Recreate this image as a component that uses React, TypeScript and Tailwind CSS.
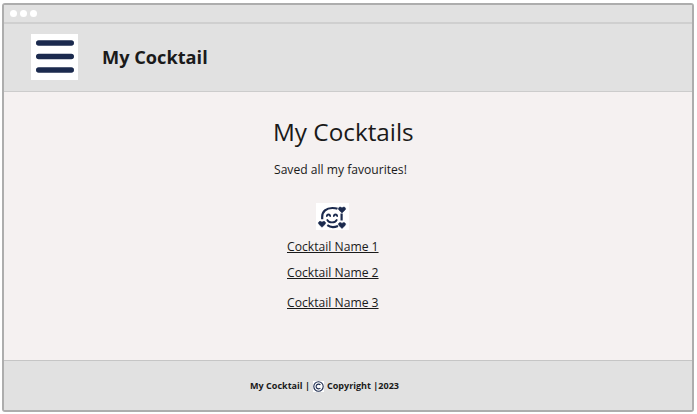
const links = [
  { name: "Cocktail Name 1", gap: "" },
  { name: "Cocktail Name 2", gap: "mt-[10px]" },
  { name: "Cocktail Name 3", gap: "mt-[14px]" },
];

function MenuIcon() {
  return (
    <svg className="block h-[46px] w-[47px] bg-white" viewBox="0 0 47 46" fill="none" stroke="#1b2a4e" strokeWidth="5.4" strokeLinecap="round">
      <path d="M7.7 9H40.3M7.7 22.5H40.3M7.7 36H40.3" />
    </svg>
  );
}

function LoveFaceIcon() {
  return (
    <svg className="block h-[27px] w-[33px] bg-white" viewBox="0 0 33 27" fill="none" stroke="#1b2a4e" strokeWidth="2.2">
      <path d="M21.5 5.8C19.8 5.1 18.4 5 16.3 5C10.3 5 6.2 8.5 6.2 13.8V16.3M11.3 22.2C14 24.2 18.3 24.4 22 22.9M25.6 10.6V17.6" />
      <path d="M10.8 13C11.2 11 13.8 11 14.2 13M17.8 13C18.2 11 20.8 11 21.2 13M11.3 17C13 20.2 19 20.2 20.7 17" strokeWidth="1.8" strokeLinecap="round" />
      <g fill="#1b2a4e" stroke="#1b2a4e" strokeWidth="0.5">
        <path d="M26 10L22.9 7C21.2 5.1 24 2.8 26 4.9C28 2.8 30.8 5.1 29.1 7Z" />
        <path d="M6 24.3L2.9 21.3C1.2 19.4 4 17.1 6 19.2C8 17.1 10.8 19.4 9.1 21.3Z" />
        <path d="M26 25.5L22.9 22.5C21.2 20.6 24 18.3 26 20.4C28 18.3 30.8 20.6 29.1 22.5Z" />
      </g>
    </svg>
  );
}

function CopyrightIcon() {
  return (
    <svg className="block h-[11px] w-[11px] bg-white" viewBox="0 0 11 11" fill="none" stroke="#1b2a4e" strokeWidth="1.1">
      <circle cx="5.5" cy="5.5" r="4.7" />
      <path d="M7.4 4A2.4 2.4 0 1 0 7.4 7" />
    </svg>
  );
}

export default function App() {
  return (
    <div className="h-[414px] w-[697px] bg-white pl-[2px] pt-[3px] font-['Open_Sans',sans-serif] text-[#1a1a1a]">
      <div className="flex h-[409px] w-[692px] flex-col overflow-hidden rounded-[3px] border-2 border-[#adadad] bg-[#f5f1f1]">
        <div className="flex h-[19px] shrink-0 items-center gap-[3px] border-b-2 border-[#cfcfcf] bg-[#e1e1e1] pl-[5.5px]">
          <span className="h-[7px] w-[7px] rounded-full bg-white" />
          <span className="h-[7px] w-[7px] rounded-full bg-white" />
          <span className="h-[7px] w-[7px] rounded-full bg-white" />
        </div>
        <header className="flex h-[68px] shrink-0 items-center border-b border-[#cccccc] bg-[#e1e1e1] pb-[2px] pl-[27px]">
          <MenuIcon />
          <span className="ml-[24px] whitespace-nowrap text-[18.2px] font-bold leading-6">My Cocktail</span>
        </header>
        <main className="flex flex-1 flex-col pt-[24px]">
          <h1 className="ml-[269px] whitespace-nowrap text-[24.3px] leading-8">My Cocktails</h1>
          <p className="ml-[270px] mt-[14px] whitespace-nowrap text-[12.12px] leading-4">Saved all my favourites!</p>
          <div className="ml-[312px] mt-[25px]"><LoveFaceIcon /></div>
          <nav className="ml-[283px] mt-[9px] flex flex-col items-start">
            {links.map((link) => (
              <a key={link.name} href="#" className={"whitespace-nowrap text-[12.15px] leading-4 underline " + link.gap}>{link.name}</a>
            ))}
          </nav>
        </main>
        <footer className="flex h-[50px] shrink-0 items-center border-t border-[#c5c5c5] bg-[#e1e1e1] pl-[246px] pt-px text-[9.05px] font-bold leading-3">
          <span className="whitespace-nowrap">My Cocktail |</span>
          <span className="ml-[3px] mr-[3px]"><CopyrightIcon /></span>
          <span className="whitespace-nowrap">Copyright |2023</span>
        </footer>
      </div>
    </div>
  );
}
